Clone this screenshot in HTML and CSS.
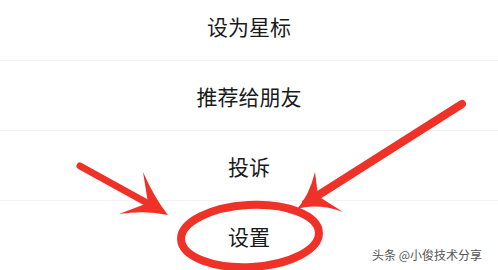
FILE: index.html
```html
<!DOCTYPE html>
<html lang="zh">
<head>
<meta charset="utf-8">
<title>菜单</title>
<link rel="stylesheet" href="styles.css">
</head>
<body>
<div class="screen">
  <ul class="menu">
    <li class="item">设为星标</li>
    <li class="item">推荐给朋友</li>
    <li class="item">投诉</li>
    <li class="item">设置</li>
  </ul>
  <svg class="marks" width="498" height="270" viewBox="0 0 498 270" aria-hidden="true">
    <g fill="#ef3128" stroke="none">
      <path d="M168 215 Q155 199 143 172 L148 203 L119 214 Q146 210 168 215 Z"/>
      <path d="M297 209 Q309 196 315 172 L318 196 L343 212 Q318 203 297 209 Z"/>
    </g>
    <g fill="none" stroke="#ef3128" stroke-linecap="round">
      <line x1="80" y1="166" x2="158" y2="209" stroke-width="7"/>
      <line x1="462" y1="104" x2="306" y2="203" stroke-width="8"/>
      <ellipse cx="250" cy="236" rx="69" ry="31" stroke-width="8" transform="rotate(-3 250 236)"/>
    </g>
  </svg>
  <div class="watermark">头条 @小俊技术分享</div>
</div>
</body>
</html>
```

FILE: styles.css
```css
html, body {
  margin: 0;
  padding: 0;
  background: #ffffff;
}
.screen {
  position: relative;
  width: 498px;
  height: 270px;
  overflow: hidden;
  background: #ffffff;
  font-family: "Noto Sans CJK SC", "Noto Sans", sans-serif;
}
.menu {
  list-style: none;
  margin: -9px 0 0 0;
  padding: 0;
  display: flex;
  flex-direction: column;
}
.item {
  height: 69px;
  border-bottom: 1px solid #f2f2f2;
  display: flex;
  align-items: center;
  justify-content: center;
  font-size: 21px;
  color: #1a1a1a;
  letter-spacing: 0;
}
.marks {
  position: absolute;
  left: 0;
  top: 0;
}
.watermark {
  position: absolute;
  left: 372px;
  top: 246px;
  font-size: 12px;
  line-height: 18px;
  color: #555555;
  white-space: nowrap;
  text-shadow: 0 0 2px #ffffff;
}
```
